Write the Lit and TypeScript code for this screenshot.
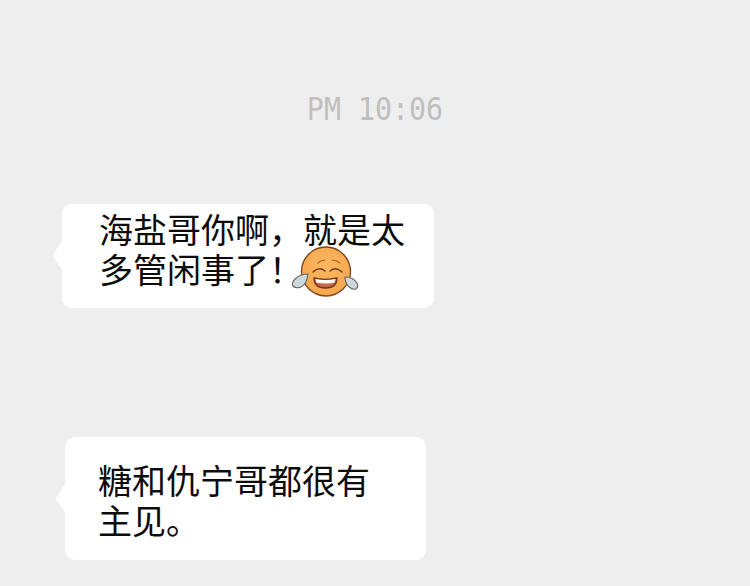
import {css, html, LitElement} from 'lit';
import {customElement} from 'lit/decorators.js';

@customElement('app-root')
export class AppRoot extends LitElement {
  static styles = css`
    :host {
      display: block;
      width: 750px;
      height: 586px;
      overflow: hidden;
      background: #eeeeee;
      font-family: 'Noto Sans CJK SC', 'Liberation Sans', sans-serif;
      color: #0c0c0c;
    }

    .chat {
      display: flex;
      flex-direction: column;
      align-items: flex-start;
      padding-top: 91px;
    }

    .time {
      align-self: center;
      font-family: 'DejaVu Sans Mono', monospace;
      font-size: 28.300px;
      line-height: 38px;
      color: #bfbfbf;
      transform: scaleY(1.12);
    }

    .bubble {
      position: relative;
      box-sizing: border-box;
      background: #ffffff;
      border-radius: 10px;
      font-size: 34px;
      line-height: 40px;
    }

    /* flattened diamond, half of it sticks out of the bubble */
    .bubble::before {
      content: '';
      position: absolute;
      left: -10.500px;
      top: 50%;
      width: 21px;
      height: 21px;
      margin-top: -11px;
      background: #ffffff;
      border-radius: 2px;
      transform: scaleX(0.67) rotate(45deg);
    }

    .first {
      margin: 75px 0 0 62px;
      width: 372px;
      height: 104px;
      padding: 4.500px 20px 0 37px;
    }

    .second {
      margin: 129px 0 0 65px;
      width: 361px;
      height: 123px;
      padding: 23px 40px 0 33px;
    }

    .emoji {
      display: inline-block;
      width: 68px;
      height: 54px;
      margin: -10px 0 -10px -20px;
      vertical-align: -6.500px;
    }
  `;

  private renderEmoji() {
    return html`
      <svg class="emoji" viewBox="0 0 68 54" aria-hidden="true">
        <defs>
          <radialGradient id="face" cx="0.5" cy="0.4" r="0.65">
            <stop offset="0" stop-color="#fbb860" />
            <stop offset="1" stop-color="#f5a54c" />
          </radialGradient>
        </defs>
        <circle cx="35" cy="26.500" r="24.500" fill="url(#face)" stroke="#7f4420" stroke-width="1.300" />
        <path d="M27 18q3-3 7-3M41 15q4 0 8 3" fill="none" stroke="#a8612c" stroke-width="1.200" stroke-linecap="round" />
        <path d="M22 27q6-6 12-1M39 26q6-5 12 1" fill="none" stroke="#74391a" stroke-width="1.500" stroke-linecap="round" />
        <path d="M23 33q12 3 23 0q0 10-11.500 10t-11.500-10z" fill="#c9674a" stroke="#74361c" stroke-width="1.300" />
        <path d="M24.500 34q10 2 20 0l-1 3.500q-9 2-18 0z" fill="#ffffff" />
        <path d="M17 29q-8 0-13 5q-4 4-2 7q3 3 8 1q6-3 7-13z" fill="#cdd8de" stroke="#6b625c" stroke-width="1.100" />
        <path d="M54 32q0 6 4 10q4 3 7 2q3-2 1-6q-4-6-12-6z" fill="#cdd8de" stroke="#6b625c" stroke-width="1.100" />
      </svg>
    `;
  }

  render() {
    return html`
      <div class="chat">
        <div class="time">PM 10:06</div>
        <div class="bubble first">海盐哥你啊，就是太<br />多管闲事了！${this.renderEmoji()}</div>
        <div class="bubble second">糖和仇宁哥都很有<br />主见。</div>
      </div>
    `;
  }
}
